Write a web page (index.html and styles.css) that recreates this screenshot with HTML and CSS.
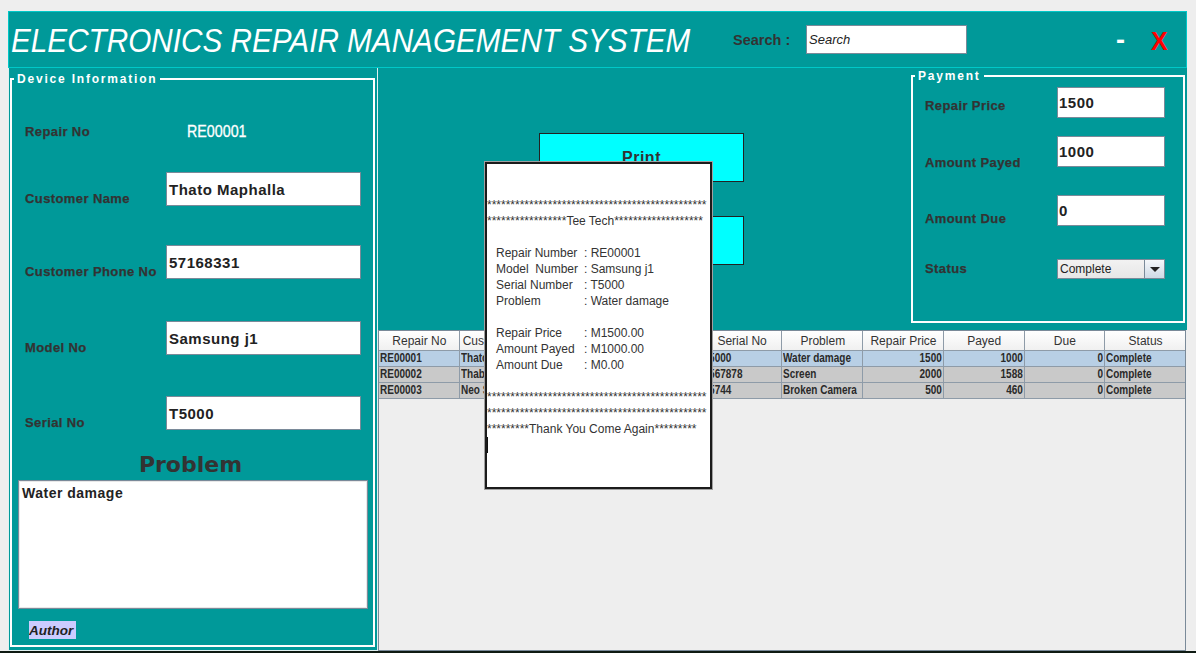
FILE: index.html
```html
<!DOCTYPE html>
<html lang="en">
<head>
<meta charset="utf-8">
<title>Electronics Repair Management System</title>
<link rel="stylesheet" href="styles.css">
</head>
<body>
<div class="window">
  <header class="header">
    <div class="title"><span>ELECTRONICS REPAIR MANAGEMENT SYSTEM</span></div>
    <div class="search-label">Search :</div>
    <div class="search-box">Search</div>
    <div class="win-min">-</div>
    <div class="win-close">X</div>
  </header>
  <div class="main">
    <section class="left">
      <fieldset class="box device">
        <legend>Device Information</legend>
        <div class="field f-repair"><span class="lbl">Repair No</span><span class="repair-val">RE00001</span></div>
        <div class="field f-name"><span class="lbl">Customer Name</span><div class="input">Thato Maphalla</div></div>
        <div class="field f-phone"><span class="lbl">Customer Phone No</span><div class="input">57168331</div></div>
        <div class="field f-model"><span class="lbl">Model No</span><div class="input">Samsung j1</div></div>
        <div class="field f-serial"><span class="lbl">Serial No</span><div class="input">T5000</div></div>
        <div class="problem-title">Problem</div>
        <div class="textarea">Water damage</div>
        <div class="author">Author</div>
      </fieldset>
    </section>
    <section class="right">
      <div class="top">
        <div class="actions">
          <div class="btn">Print</div>
          <div class="btn">Save</div>
        </div>
        <fieldset class="box payment">
          <legend>Payment</legend>
          <div class="pay-grid">
            <div class="pay-labels">
              <span class="lbl pl1">Repair Price</span>
              <span class="lbl pl2">Amount Payed</span>
              <span class="lbl pl3">Amount Due</span>
              <span class="lbl pl4">Status</span>
            </div>
            <div class="pay-inputs">
              <div class="input pin pi1">1500</div>
              <div class="input pin pi2">1000</div>
              <div class="input pin pi3">0</div>
              <div class="combo pi4"><span class="combo-text">Complete</span><span class="combo-arrow"><span class="tri"></span></span></div>
            </div>
          </div>
        </fieldset>
      </div>
      <div class="table-wrap">
        <table class="grid">
          <thead>
            <tr><th>Repair No</th><th>Customer Name</th><th>Phone No</th><th>Model No</th><th>Serial No</th><th>Problem</th><th>Repair Price</th><th>Payed</th><th>Due</th><th>Status</th></tr>
          </thead>
          <tbody>
            <tr class="sel"><td><span class="c">RE00001</span></td><td><span class="c">Thato M</span></td><td><span class="c">5716833</span></td><td><span class="c">Samsung</span></td><td><span class="c">T5000</span></td><td><span class="c">Water damage</span></td><td class="num"><span class="c">1500</span></td><td class="num"><span class="c">1000</span></td><td class="num"><span class="c">0</span></td><td><span class="c">Complete</span></td></tr>
            <tr><td><span class="c">RE00002</span></td><td><span class="c">Thabo M</span></td><td><span class="c">5812345</span></td><td><span class="c">Huawei</span></td><td><span class="c">T567878</span></td><td><span class="c">Screen</span></td><td class="num"><span class="c">2000</span></td><td class="num"><span class="c">1588</span></td><td class="num"><span class="c">0</span></td><td><span class="c">Complete</span></td></tr>
            <tr><td><span class="c">RE00003</span></td><td><span class="c">Neo Sello</span></td><td><span class="c">6234567</span></td><td><span class="c">iPhone</span></td><td><span class="c">T5744</span></td><td><span class="c">Broken Camera</span></td><td class="num"><span class="c">500</span></td><td class="num"><span class="c">460</span></td><td class="num"><span class="c">0</span></td><td><span class="c">Complete</span></td></tr>
          </tbody>
        </table>
      </div>
    </section>
  </div>
</div>
<div class="taskbar"></div>

<div class="receipt">
  <div class="ln"></div>
  <div class="ln"></div>
  <div class="ln">***********************************************</div>
  <div class="ln">*****************Tee Tech*******************</div>
  <div class="ln"></div>
  <div class="ln kv"><span class="k">Repair Number</span><span>: RE00001</span></div>
  <div class="ln kv"><span class="k">Model  Number</span><span>: Samsung j1</span></div>
  <div class="ln kv"><span class="k">Serial Number</span><span>: T5000</span></div>
  <div class="ln kv"><span class="k">Problem</span><span>: Water damage</span></div>
  <div class="ln"></div>
  <div class="ln kv"><span class="k">Repair Price</span><span>: M1500.00</span></div>
  <div class="ln kv"><span class="k">Amount Payed</span><span>: M1000.00</span></div>
  <div class="ln kv"><span class="k">Amount Due</span><span>: M0.00</span></div>
  <div class="ln"></div>
  <div class="ln">***********************************************</div>
  <div class="ln">***********************************************</div>
  <div class="ln">*********Thank You Come Again*********</div>
  <div class="ln"><span class="caret"></span></div>
</div>
</body>
</html>
```

FILE: styles.css
```css
html, body {
  margin: 0;
  padding: 0;
}
body {
  width: 1196px;
  height: 653px;
  overflow: hidden;
  background: #eeeeee;
  font-family: "Liberation Sans", Arial, sans-serif;
  color: #333333;
  position: relative;
}

.window {
  margin: 11px 0 0 8px;
  width: 1179px;
  height: 640px;
  display: flex;
  flex-direction: column;
}

/* ---------- header ---------- */
.header {
  height: 57px;
  flex: none;
  box-sizing: border-box;
  border: 1px solid #00c8c8;
  background: #009999;
  display: flex;
  align-items: center;
}
.title {
  width: 724px;
  flex: none;
  box-sizing: border-box;
  padding-left: 2px;
  white-space: nowrap;
  overflow: visible;
}
.title span {
  display: inline-block;
  font-size: 33px;
  font-style: italic;
  color: #ffffff;
  transform: scaleX(0.9);
  transform-origin: left center;
  line-height: 40px;
  position: relative;
  top: 1px;
}
.search-label {
  width: 73px;
  flex: none;
  font-weight: bold;
  font-size: 14.5px;
  color: #333;
}
.search-box {
  width: 161px;
  height: 29px;
  flex: none;
  box-sizing: border-box;
  border: 1px solid #7a8a99;
  background: #fff;
  font-size: 13px;
  font-style: italic;
  color: #222;
  line-height: 27px;
  padding-left: 2px;
}
.win-min {
  margin-left: 149px;
  width: 35px;
  flex: none;
  color: #fff;
  font-weight: bold;
  font-size: 27px;
  line-height: 30px;
}
.win-close {
  flex: none;
  color: #ff0000;
  font-weight: bold;
  font-size: 25px;
  line-height: 30px;
  margin-top: 2px;
}

/* ---------- main ---------- */
.main {
  flex: 1;
  display: flex;
  min-height: 0;
}

.box {
  margin: 0;
  padding: 0;
  min-width: 0;
  border: 2px solid #ffffff;
}
.box legend {
  margin-left: 2px;
  padding: 0 3px;
  font-weight: bold;
  font-size: 12px;
  letter-spacing: 1.8px;
  line-height: 14px;
  color: #ffffff;
}

.lbl {
  font-weight: bold;
  font-size: 13px;
  letter-spacing: 0.4px;
  line-height: 16px;
  color: #333;
  white-space: nowrap;
  -webkit-text-stroke: 0.25px #333;
}

.input {
  box-sizing: border-box;
  background: #ffffff;
  border: 1px solid #7a8a99;
  font-weight: bold;
  font-size: 15px;
  letter-spacing: 0.5px;
  color: #222;
  padding-left: 2px;
  display: flex;
  align-items: center;
}

/* left panel */
.left {
  width: 370px;
  flex: none;
  box-sizing: border-box;
  background: #009999;
  border: 1px solid #dff0f0;
  border-top: none;
  padding: 4px 2px 3px 1px;
  display: flex;
  flex-direction: column;
}
.device {
  flex: 1;
  display: flex;
  flex-direction: column;
}
.field {
  display: flex;
  padding-left: 13px;
  flex: none;
}
.field .lbl {
  width: 141px;
  flex: none;
  align-self: flex-end;
  margin-bottom: -1px;
}
.field .input {
  width: 195px;
  height: 34px;
}
.f-repair {
  margin-top: 38px;
  height: 16px;
  align-items: center;
}
.f-repair .lbl {
  align-self: center;
  margin-bottom: 0;
  width: 162px;
}
.repair-val {
  display: inline-block;
  font-size: 17px;
  color: #ffffff;
  line-height: 16px;
  transform: scaleX(0.84);
  transform-origin: left center;
  -webkit-text-stroke: 0.3px #fff;
}
.f-name { margin-top: 32px; }
.f-phone { margin-top: 39px; }
.f-model { margin-top: 42px; }
.f-serial { margin-top: 41px; }

.problem-title {
  margin-top: 22px;
  text-align: center;
  font-family: "DejaVu Sans", sans-serif;
  font-weight: bold;
  font-size: 22px;
  line-height: 26px;
  color: #333;
  padding-right: 4px;
}
.textarea {
  margin: 2px 5px 0 6px;
  height: 129px;
  box-sizing: border-box;
  background: #fff;
  border: 1px solid #7a8a99;
  box-shadow: inset 0 0 0 1px #e8e8e8;
  font-weight: bold;
  font-size: 14px;
  letter-spacing: 0.5px;
  color: #222;
  padding: 4px 0 0 3px;
  flex: none;
}
.author {
  margin: 12px 0 0 17px;
  width: 47px;
  height: 18px;
  background: #ccccff;
  font-weight: bold;
  font-style: italic;
  font-size: 13.5px;
  line-height: 20px;
  color: #222;
  flex: none;
  overflow: hidden;
}

/* right */
.right {
  width: 809px;
  flex: none;
  display: flex;
  flex-direction: column;
}
.top {
  height: 262px;
  flex: none;
  background: #009999;
  display: flex;
}
.actions {
  margin-left: 161px;
  padding-top: 65px;
  display: flex;
  flex-direction: column;
  gap: 34px;
  flex: none;
}
.btn {
  width: 205px;
  height: 49px;
  box-sizing: border-box;
  border: 1px solid #222;
  background: #00ffff;
  font-weight: bold;
  font-size: 16px;
  color: #333;
  display: flex;
  align-items: center;
  justify-content: center;
  letter-spacing: 0.5px;
}

.payment {
  margin: 1px 2px 0 167px;
  width: 274px;
  height: 254px;
  box-sizing: border-box;
  flex: none;
}
.pay-grid {
  display: flex;
  padding-left: 12px;
}
.pay-labels {
  width: 132px;
  display: flex;
  flex-direction: column;
  flex: none;
}
.pl1 { margin-top: 15px; }
.pl2 { margin-top: 41px; }
.pl3 { margin-top: 40px; }
.pl4 { margin-top: 34px; }
.pay-inputs {
  width: 108px;
  display: flex;
  flex-direction: column;
}
.pin {
  height: 31px;
  padding-left: 1px;
}
.pi1 { margin-top: 4px; }
.pi2 { margin-top: 18px; }
.pi3 { margin-top: 28px; }
.pi4 { margin-top: 33px; }

.combo {
  height: 20px;
  box-sizing: border-box;
  border: 1px solid #7a8a99;
  background: linear-gradient(#f2f2f2, #e6e6e6);
  display: flex;
}
.combo-text {
  flex: 1;
  font-size: 12px;
  line-height: 18px;
  padding-left: 2px;
  color: #222;
}
.combo-arrow {
  width: 19px;
  border-left: 1px solid #7a8a99;
  background: linear-gradient(#f4f7fa, #cfdae6);
  display: flex;
  align-items: center;
  justify-content: center;
}
.tri {
  width: 0;
  height: 0;
  border-left: 5px solid transparent;
  border-right: 5px solid transparent;
  border-top: 5px solid #222;
}

/* table */
.table-wrap {
  flex: 1;
  box-sizing: border-box;
  background: #eeeeee;
  border: 1px solid #7a8a99;
  margin-right: 1px;
  overflow: hidden;
}
.grid {
  width: 807px;
  table-layout: fixed;
  border-collapse: separate;
  border-spacing: 0;
}
.grid th {
  height: 19px;
  padding: 0 2px 0 3px;
  font-weight: normal;
  font-size: 12px;
  color: #333;
  background: linear-gradient(#ffffff, #f0f0f0);
  border-right: 1px solid #8e9ba8;
  border-bottom: 1px solid #8e9ba8;
  white-space: nowrap;
  overflow: hidden;
  text-align: center;
}
.grid td {
  height: 15px;
  padding: 0 1px;
  line-height: 15px;
  font-weight: bold;
  font-size: 12.5px;
  color: #2a2a2a;
  background: #c9c9c9;
  border-right: 1px solid #8e9ba8;
  border-bottom: 1px solid #8e9ba8;
  white-space: nowrap;
  overflow: hidden;
}
.grid td .c {
  display: inline-block;
  transform: scaleX(0.8);
  transform-origin: left center;
}
.grid tr.sel td {
  background: #b8cfe5;
}
.grid td.num {
  text-align: right;
}
.grid td.num .c {
  transform-origin: right center;
}

.taskbar {
  height: 2px;
  background: #0e1a12;
}

/* receipt popup */
.receipt {
  position: absolute;
  left: 485px;
  top: 162px;
  width: 227px;
  height: 327px;
  box-sizing: border-box;
  border: 2px solid #1b1b1b;
  box-shadow: 0 0 0 1px #a0a0a0;
  background: #ffffff;
  padding-top: 1px;
  font-size: 12px;
  color: #333;
  overflow: hidden;
}
.ln {
  height: 16px;
  line-height: 16px;
  white-space: pre;
  overflow: hidden;
}
.kv {
  display: flex;
  padding-left: 9px;
}
.kv .k {
  width: 88px;
  flex: none;
  white-space: pre;
}
.caret {
  display: inline-block;
  width: 1px;
  height: 16px;
  background: #111;
  vertical-align: top;
}
```
